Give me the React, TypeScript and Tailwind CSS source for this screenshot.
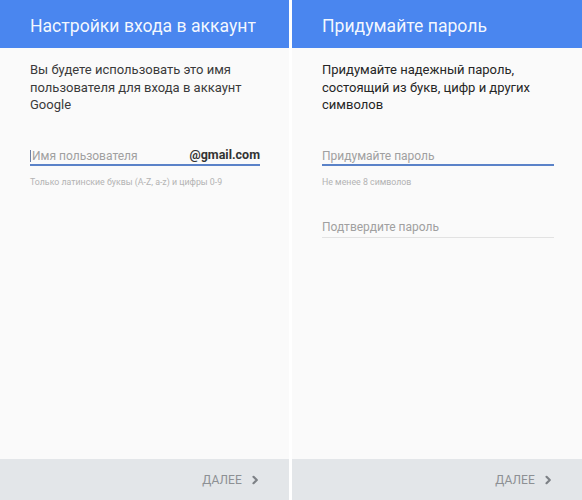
const Chevron = () => (
  <svg width="8" height="10" viewBox="0 0 8 10" fill="none" stroke="#7d8186" strokeWidth="2.2" strokeLinecap="round" strokeLinejoin="round">
    <path d="M2.5 1.8L5.8 5L2.5 8.2" />
  </svg>
);

function Footer() {
  return (
    <div className="h-[41px] bg-[#e3e6e9] flex items-center justify-end pr-[30px] gap-[9px]">
      <span className="text-[12px] text-[#8d9094] tracking-[0.01em]">ДАЛЕЕ</span>
      <Chevron />
    </div>
  );
}

function Header({ title }: { title: string }) {
  return (
    <div className="h-12 bg-[#4a86ef] flex items-center pl-[30px] pt-[5px]">
      <h1 className="text-[17.6px] text-white/95 leading-none">{title}</h1>
    </div>
  );
}

export default function App() {
  return (
    <div className="w-[582px] h-[500px] flex gap-[3px] bg-white" style={{ fontFamily: "Roboto, 'Liberation Sans', sans-serif" }}>
      {/* Login settings */}
      <div className="w-[289px] flex flex-col">
        <Header title="Настройки входа в аккаунт" />
        <div className="flex-1 bg-[#fafafa] pl-[30px] pr-[29px] pt-[13px]">
          <p className="text-[13px] leading-[17.5px] text-[#3a3a3a]">
            Вы будете использовать это имя пользователя для входа в аккаунт Google
          </p>
          <div className="mt-[34px] flex items-center h-[18px] border-b-2 border-[#5a82c8]">
            <span className="w-px h-[12px] bg-[#6b7fa6] mr-[1px]" />
            <span className="flex-1 text-[12px] text-[#a0a0a0]">Имя пользователя</span>
            <span className="text-[12.5px] font-bold text-[#333]">@gmail.com</span>
          </div>
          <p className="mt-[10px] text-[8.8px] leading-[12px] text-[#b3b3b3]">
            Только латинские буквы (A-Z, a-z) и цифры 0-9
          </p>
        </div>
        <Footer />
      </div>

      {/* Password */}
      <div className="flex-1 flex flex-col">
        <Header title="Придумайте пароль" />
        <div className="flex-1 bg-[#fafafa] pl-[30px] pr-[28px] pt-[13px]">
          <p className="text-[13px] leading-[17.5px] text-[#262626]">
            Придумайте надежный пароль, состоящий из букв, цифр и других символов
          </p>
          <div className="mt-[34px] flex items-center h-[18px] border-b-2 border-[#5a82c8]">
            <span className="text-[12px] text-[#a0a0a0]">Придумайте пароль</span>
          </div>
          <p className="mt-[10px] text-[8.8px] leading-[12px] text-[#b3b3b3]">Не менее 8 символов</p>
          <div className="mt-[31px] flex items-center h-[19px] border-b border-[#e2e2e2] pb-[2px]">
            <span className="text-[12px] text-[#a0a0a0]">Подтвердите пароль</span>
          </div>
        </div>
        <Footer />
      </div>
    </div>
  );
}
